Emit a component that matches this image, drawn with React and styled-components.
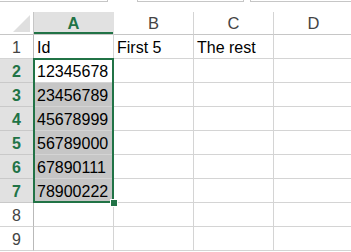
import React from "react";
import styled, { createGlobalStyle } from "styled-components";

const columns = ["A", "B", "C", "D"];

const rows = [
  ["Id", "First 5", "The rest", ""],
  ["12345678", "", "", ""],
  ["23456789", "", "", ""],
  ["45678999", "", "", ""],
  ["56789000", "", "", ""],
  ["67890111", "", "", ""],
  ["78900222", "", "", ""],
  ["", "", "", ""],
  ["", "", "", ""],
];

// rows 2..7 of column A are selected, A2 is the active cell
const isSelected = (r, c) => c === 0 && r >= 2 && r <= 7;
const isActive = (r, c) => c === 0 && r === 2;

const App = () => {
  return (
    <>
      <GlobalStyle />
      <Page>
        <TopStrip>
          <TopBox $width={108} $first />
          <Spacer $width={29} />
          <TopBox $width={107} />
          <Spacer $width={6} />
          <TopBox $width={110} />
        </TopStrip>

        <Sheet>
          <Corner>
            <svg width="17" height="17" viewBox="0 0 17 17">
              <polygon points="17,0 17,17 0,17" fill="#dfdfdf" />
            </svg>
          </Corner>
          {columns.map((col, i) => (
            <ColumnHeader key={col} $active={i === 0}>
              {col}
            </ColumnHeader>
          ))}

          {rows.map((row, idx) => {
            const r = idx + 1;
            return (
              <React.Fragment key={r}>
                <RowHeader $active={r >= 2 && r <= 7}>{r}</RowHeader>
                {row.map((value, c) => (
                  <Cell
                    key={c}
                    $selected={isSelected(r, c) && !isActive(r, c)}
                  >
                    {value}
                  </Cell>
                ))}
              </React.Fragment>
            );
          })}

          <Selection>
            <FillHandle />
          </Selection>
        </Sheet>
      </Page>
    </>
  );
};

export default App;

const GlobalStyle = createGlobalStyle`
  html, body {
    margin: 0;
    padding: 0;
    background: #ffffff;
  }
  body {
    font-family: "Liberation Sans", Arial, sans-serif;
  }
`;

const Page = styled.div`
  width: 351px;
  height: 252px;
  overflow: hidden;
  background: #ffffff;
`;

const TopStrip = styled.div`
  display: flex;
  height: 12px;
`;

const TopBox = styled.div`
  width: ${(p) => p.$width}px;
  height: 2px;
  box-sizing: border-box;
  border-bottom: 1px solid #c6c6c6;
  border-right: 1px solid #c6c6c6;
  border-left: ${(p) => (p.$first ? "none" : "1px solid #c6c6c6")};
  flex-shrink: 0;
`;

const Spacer = styled.div`
  width: ${(p) => p.$width}px;
  flex-shrink: 0;
`;

const Sheet = styled.div`
  position: relative;
  display: grid;
  grid-template-columns: 34px 80px 80px 80px 80px;
  grid-template-rows: 23px;
  grid-auto-rows: 24px;
  font-size: 16px;
`;

const Corner = styled.div`
  box-sizing: border-box;
  border-right: 1px solid #c6c6c6;
  border-bottom: 1px solid #c6c6c6;
  display: flex;
  align-items: flex-end;
  justify-content: flex-end;
  padding: 0 3px 2px 0;
  svg {
    display: block;
  }
`;

const ColumnHeader = styled.div`
  box-sizing: border-box;
  text-align: center;
  line-height: 21px;
  padding-top: 1px;
  font-size: 16.5px;
  color: ${(p) => (p.$active ? "#217346" : "#444444")};
  font-weight: ${(p) => (p.$active ? 700 : 400)};
  background: ${(p) => (p.$active ? "#e1e1e1" : "#ffffff")};
  border-right: 1px solid ${(p) => (p.$active ? "#e1e1e1" : "#d4d4d4")};
  border-bottom: 1px solid #c6c6c6;
  box-shadow: ${(p) => (p.$active ? "inset 0 -2px 0 #217346" : "none")};
`;

const RowHeader = styled.div`
  box-sizing: border-box;
  text-align: center;
  line-height: 21px;
  padding-top: 2px;
  color: ${(p) => (p.$active ? "#217346" : "#444444")};
  font-weight: ${(p) => (p.$active ? 700 : 400)};
  background: ${(p) => (p.$active ? "#e1e1e1" : "#ffffff")};
  border-right: 1px solid #b9b9b9;
  border-bottom: 1px solid ${(p) => (p.$active ? "#c9c9c9" : "#d4d4d4")};
`;

const Cell = styled.div`
  box-sizing: border-box;
  padding: 2px 0 0 3px;
  line-height: 21px;
  color: #000000;
  white-space: nowrap;
  overflow: visible;
  background: ${(p) => (p.$selected ? "#c6c6c6" : "#ffffff")};
  border-right: 1px solid #d4d4d4;
  border-bottom: 1px solid #d4d4d4;
`;

const Selection = styled.div`
  position: absolute;
  left: 33px;
  top: 46px;
  width: 81px;
  height: 145px;
  box-sizing: border-box;
  border: 2px solid #217346;
  pointer-events: none;
`;

const FillHandle = styled.div`
  position: absolute;
  right: -5px;
  bottom: -5px;
  width: 6px;
  height: 6px;
  background: #217346;
  box-shadow: 0 0 0 1px #ffffff;
`;
